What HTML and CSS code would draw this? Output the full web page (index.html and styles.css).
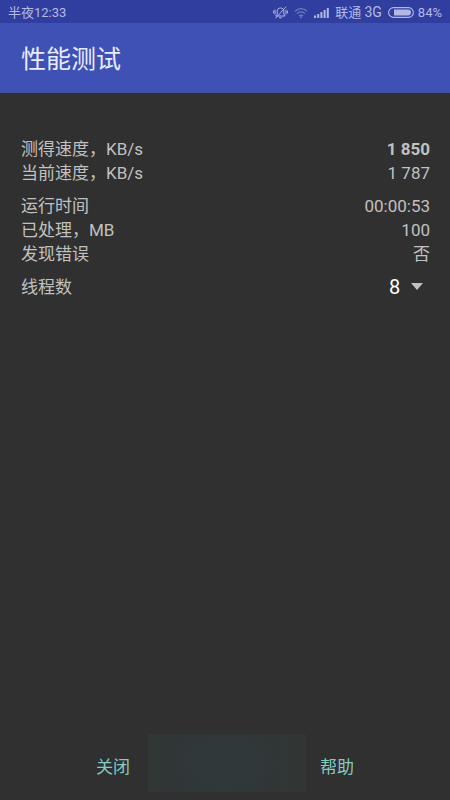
FILE: index.html
```html
<!DOCTYPE html>
<html lang="zh-CN">
<head>
<meta charset="utf-8">
<meta name="viewport" content="width=device-width, initial-scale=1">
<title>性能测试</title>
<link rel="stylesheet" href="styles.css">
</head>
<body>
<div class="status">
  <span>半夜12:33</span>
  <div class="status-icons">
    <svg class="mute" width="15" height="13" viewBox="0 0 15 13" fill="none" stroke="currentColor" stroke-linecap="round">
      <path d="M3 10h9L10.800 8V5c0-2-1.300-3-3.300-3S4.200 3 4.200 5v3zM6.500 11.800h2M12.800 1 2.800 12M2 4v4M.6 5v2M13 4v4M14.400 5v2"/>
    </svg>
    <svg class="wifi" width="14" height="12" viewBox="0 0 14 12" fill="none" stroke="currentColor" stroke-width="1.300">
      <path d="M1 4.200q6-5 12 0M3 6.600q4-3.300 8 0M5 9q2-1.600 4 0"/>
      <circle cx="7" cy="10.300" r="1" fill="currentColor" stroke="none"/>
    </svg>
    <svg class="signal" width="15" height="10" viewBox="0 0 15 10" fill="currentColor">
      <path d="M0 7.500h2V10H0zM3.200 6h2v4h-2zM6.400 4h2v6h-2zM9.600 2h2v8h-2zM12.800 0h2v10h-2z"/>
    </svg>
    <span class="carrier">联通 <span class="network">3G</span></span>
    <svg class="battery" width="26" height="11" viewBox="0 0 26 11">
      <rect x=".6" y=".6" width="24.800" height="9.800" rx="4.900" fill="none" stroke="currentColor" stroke-width="1.100"/>
      <path d="M6 2.500h14a3 3 0 0 1 0 6H6z" fill="currentColor"/>
    </svg>
    <span>84%</span>
  </div>
</div>
<header class="bar"><h1>性能测试</h1></header>
<main>
  <dl class="group">
    <div class="row"><dt>测得速度，KB/s</dt><dd class="strong">1 850</dd></div>
    <div class="row"><dt>当前速度，KB/s</dt><dd>1 787</dd></div>
  </dl>
  <dl class="group">
    <div class="row"><dt>运行时间</dt><dd>00:00:53</dd></div>
    <div class="row"><dt>已处理，MB</dt><dd>100</dd></div>
    <div class="row"><dt>发现错误</dt><dd>否</dd></div>
  </dl>
  <div class="row">
    <label for="threads">线程数</label>
    <div class="picker">
      <select id="threads"><option>1</option><option>2</option><option>4</option><option selected>8</option></select>
      <svg class="arrow" width="12" height="7" viewBox="0 0 12 7" fill="currentColor"><path d="M0 0h12L6 7z"/></svg>
    </div>
  </div>
</main>
<footer>
  <button class="close" type="button">关闭</button>
  <button class="action" type="button" aria-label="操作"></button>
  <button class="help" type="button">帮助</button>
</footer>
</body>
</html>
```
FILE: styles.css
```css
* {
  box-sizing: border-box;
}

body {
  margin: 0;
  min-height: 100vh;
  display: flex;
  flex-direction: column;
  background: #303030;
  color: #c1c1c1;
  font: 17px/24px Roboto, "Noto Sans CJK SC", sans-serif;
}

.status {
  height: 23px;
  padding: 2px 8px 0;
  display: flex;
  align-items: center;
  justify-content: space-between;
  background: #303f9f;
  color: #b3b9e4;
  font-size: 13px;
  line-height: 21px;
}

.status-icons {
  display: flex;
  align-items: center;
}

.mute {
  margin-right: 6px;
}

.wifi {
  margin-right: 6px;
  opacity: 0.5;
}

.signal {
  margin-right: 6px;
}

.network {
  font-size: 14px;
}

.battery {
  margin: 0 4px 0 6px;
}

.bar {
  padding: 19px 21px 15px;
  background: #3f51b5;
  border-bottom: 1px solid #4853a0;
}

h1 {
  margin: 0;
  color: #e9ecff;
  font-size: 25px;
  font-weight: 400;
  line-height: 35px;
}

main {
  flex: 1;
  padding: 44px 20px 0 21px;
}

.group {
  margin: 0 0 9px;
}

.row {
  display: flex;
  justify-content: space-between;
  height: 24px;
}

dd {
  margin: 0;
}

.strong {
  font-weight: 700;
}

.picker {
  position: relative;
  display: flex;
  width: 41px;
}

select {
  appearance: none;
  width: 100%;
  margin: 0;
  padding: 0;
  border: 0;
  background: transparent;
  color: #fff;
  font: 20px/24px Roboto, sans-serif;
}

.arrow {
  position: absolute;
  right: 7px;
  top: 8px;
  pointer-events: none;
}

footer {
  display: flex;
  justify-content: center;
  padding-bottom: 8px;
}

button {
  height: 58px;
  padding: 8px 16px 0;
  border: 0;
  background: transparent;
  color: #80cbc4;
  font: inherit;
}

.close {
  padding-right: 18px;
}

.help {
  padding-left: 14px;
}

.action {
  width: 158px;
  background: radial-gradient(ellipse 50px 30px, #313839 70%, transparent), linear-gradient(90deg, #313635, #2f373a 40%, #303738 65%, #313534);
}
```
